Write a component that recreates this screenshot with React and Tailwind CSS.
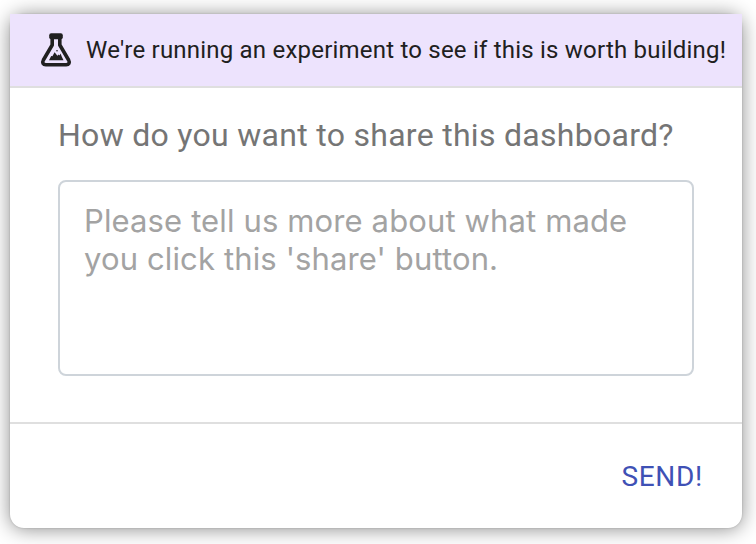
function FlaskIcon() {
  return (
    <svg width="32" height="36" viewBox="0 0 32 36" fill="none" className="block shrink-0">
      <path d="M12.2 4V13L3.4 28C1.9 30.8 3.1 32.8 5.8 32.8H26.2C28.9 32.8 30.1 30.8 28.6 28L19.8 13V4" stroke="#202020" strokeWidth="3.6" strokeLinejoin="round" />
      <rect x="9.2" y="1.2" width="13.6" height="6" rx="2" fill="#202020" />
      <path d="M9 28.2L11.2 24L12.4 24.2L14.6 20.3L17.4 23.8L18.8 22.4L19.6 23.4L20.6 21.6L21.7 24.6L23.5 28.2Z" fill="#202020" />
      <circle cx="17" cy="18.8" r="0.8" fill="#202020" />
    </svg>
  );
}

export default function App() {
  return (
    <div className="h-[544px] w-[756px] overflow-hidden bg-white pt-3.5 pl-2.5 font-[Roboto,sans-serif]">
      <section className="flex h-[514px] w-[732px] flex-col rounded-[14px] bg-white shadow-[0_0_2px_rgba(0,0,0,0.2),0_1px_20px_rgba(0,0,0,0.46)]">
        <header className="flex h-[74px] shrink-0 items-center border-b-2 border-[#dfdfdf] bg-[#ede3fd] pl-[30px]">
          <FlaskIcon />
          <p className="ml-3.5 text-2xl tracking-[0.21px] whitespace-nowrap text-[#202020]">We're running an experiment to see if this is worth building!</p>
        </header>
        <main className="flex h-[336px] shrink-0 flex-col border-b-2 border-[#dfdfdf] px-12 pt-6">
          <h1 className="text-[32px] leading-[46px] tracking-[0.29px] whitespace-nowrap text-[#757575]">How do you want to share this dashboard?</h1>
          <textarea
            className="mt-[22px] block h-[196px] w-[636px] resize-none rounded-lg border-2 border-[#ced4da] px-6 pt-5 font-[Inter,sans-serif] text-[31px] leading-[38px] tracking-[0.13px] outline-none placeholder:text-[#a3a3a3]"
            placeholder={"Please tell us more about what made\nyou click this 'share' button."}
          />
        </main>
        <footer className="flex flex-1 items-center justify-end pt-0.5 pr-[39px]">
          <button className="text-[28px] leading-8 tracking-[0.7px] text-[#3f51b5]">SEND!</button>
        </footer>
      </section>
    </div>
  );
}
